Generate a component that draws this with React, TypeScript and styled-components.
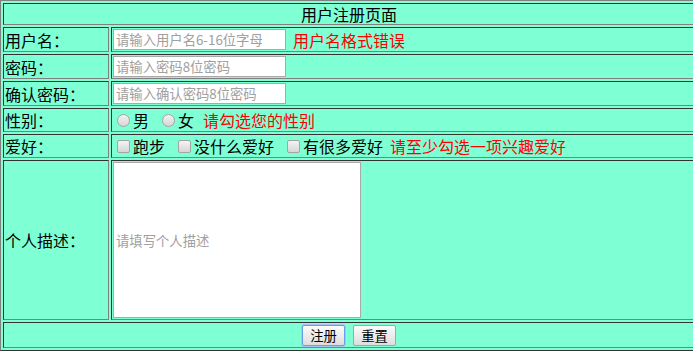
import styled, { createGlobalStyle } from 'styled-components';

const GlobalStyle = createGlobalStyle`
  html, body {
    margin: 0;
    padding: 0;
    overflow: hidden;
    background: #fff;
  }
  body {
    font-family: "Noto Sans CJK SC", "Noto Sans", sans-serif;
  }
`;

const light = '#808080';
const dark = '#333333';

const FormTable = styled.table`
  width: 698px;
  border-collapse: separate;
  border-spacing: 2px;
  background: #7fffd4;
  border-style: solid;
  border-width: 1px;
  border-color: ${light} ${dark} ${dark} ${light};
  font-size: 16px;
  line-height: 18px;
  color: #000;
`;

const Cell = styled.td<{ $center?: boolean }>`
  padding: 1px;
  border-style: solid;
  border-width: 1px;
  border-color: ${dark} ${light} ${light} ${dark};
  vertical-align: middle;
  text-align: ${({ $center }) => ($center ? 'center' : 'left')};
`;

const LabelCell = styled(Cell)`
  width: 102px;
  white-space: nowrap;
`;

const Title = styled.div`
  height: 18px;
`;

const FieldRow = styled.div<{ $h: number; $center?: boolean; $shift?: number }>`
  display: flex;
  align-items: center;
  justify-content: ${({ $center }) => ($center ? 'center' : 'flex-start')};
  height: ${({ $h }) => $h}px;
  margin-left: ${({ $shift }) => $shift ?? 0}px;
  white-space: nowrap;
`;

const TextInput = styled.input<{ $w: number; $h: number }>`
  box-sizing: border-box;
  width: ${({ $w }) => $w}px;
  height: ${({ $h }) => $h}px;
  margin: 0;
  padding: 0 2px;
  border: 1px solid #a9a9a9;
  background: #fff;
  font-family: "Noto Sans CJK SC", sans-serif;
  font-size: 13.33px;
  outline: none;

  &::placeholder {
    color: #a0a0a0;
  }
`;

const Hint = styled.span<{ $gap: number }>`
  color: #ff0000;
  margin-left: ${({ $gap }) => $gap}px;
`;

const Choice = styled.label`
  display: inline-flex;
  align-items: center;
  margin-right: 8px;
`;

const Radio = styled.input`
  appearance: none;
  box-sizing: border-box;
  width: 13px;
  height: 13px;
  margin: 0 3px 0 5px;
  border-radius: 50%;
  border: 1px solid #a4a4a4;
  background: linear-gradient(#f3f3f3, #d6d6d6);
`;

const Check = styled(Radio)`
  border-radius: 2px;
`;

const Button = styled.button<{ $focused?: boolean }>`
  box-sizing: border-box;
  height: 21px;
  width: 43px;
  margin: 0 4px;
  padding: 0;
  font-family: "Noto Sans CJK SC", sans-serif;
  font-size: 13.33px;
  line-height: 17px;
  color: #000;
  border-radius: 2px;
  border: 1px solid ${({ $focused }) => ($focused ? '#6f9be6' : '#a6a6a6')};
  box-shadow: ${({ $focused }) => ($focused ? '0 0 0 1px #a9c6f2' : 'none')};
  background: linear-gradient(#fbfbfb, #dedede);
`;

const App = () => {
  return (
    <>
      <GlobalStyle />
      <FormTable>
        <tbody>
          <tr>
            <Cell colSpan={2} $center>
              <Title>用户注册页面</Title>
            </Cell>
          </tr>
          <tr>
            <LabelCell>用户名：</LabelCell>
            <Cell>
              <FieldRow $h={21}>
                <TextInput $w={173} $h={21} placeholder="请输入用户名6-16位字母" />
                <Hint $gap={7}>用户名格式错误</Hint>
              </FieldRow>
            </Cell>
          </tr>
          <tr>
            <LabelCell>密码：</LabelCell>
            <Cell>
              <FieldRow $h={21}>
                <TextInput $w={173} $h={21} type="password" placeholder="请输入密码8位密码" />
              </FieldRow>
            </Cell>
          </tr>
          <tr>
            <LabelCell>确认密码：</LabelCell>
            <Cell>
              <FieldRow $h={21}>
                <TextInput $w={173} $h={21} type="password" placeholder="请输入确认密码8位密码" />
              </FieldRow>
            </Cell>
          </tr>
          <tr>
            <LabelCell>性别：</LabelCell>
            <Cell>
              <FieldRow $h={20} $shift={-1}>
                <Choice>
                  <Radio type="radio" name="sex" />男
                </Choice>
                <Choice>
                  <Radio type="radio" name="sex" />女
                </Choice>
                <Hint $gap={1}>请勾选您的性别</Hint>
              </FieldRow>
            </Cell>
          </tr>
          <tr>
            <LabelCell>爱好：</LabelCell>
            <Cell>
              <FieldRow $h={20} $shift={-1}>
                <Choice>
                  <Check type="checkbox" />跑步
                </Choice>
                <Choice>
                  <Check type="checkbox" />没什么爱好
                </Choice>
                <Choice>
                  <Check type="checkbox" />有很多爱好
                </Choice>
                <Hint $gap={-1}>请至少勾选一项兴趣爱好</Hint>
              </FieldRow>
            </Cell>
          </tr>
          <tr>
            <LabelCell>个人描述：</LabelCell>
            <Cell>
              <FieldRow $h={156}>
                <TextInput $w={248} $h={156} placeholder="请填写个人描述" />
              </FieldRow>
            </Cell>
          </tr>
          <tr>
            <Cell colSpan={2}>
              <FieldRow $h={22} $center>
                <Button $focused>注册</Button>
                <Button>重置</Button>
              </FieldRow>
            </Cell>
          </tr>
        </tbody>
      </FormTable>
    </>
  );
};

export default App;
